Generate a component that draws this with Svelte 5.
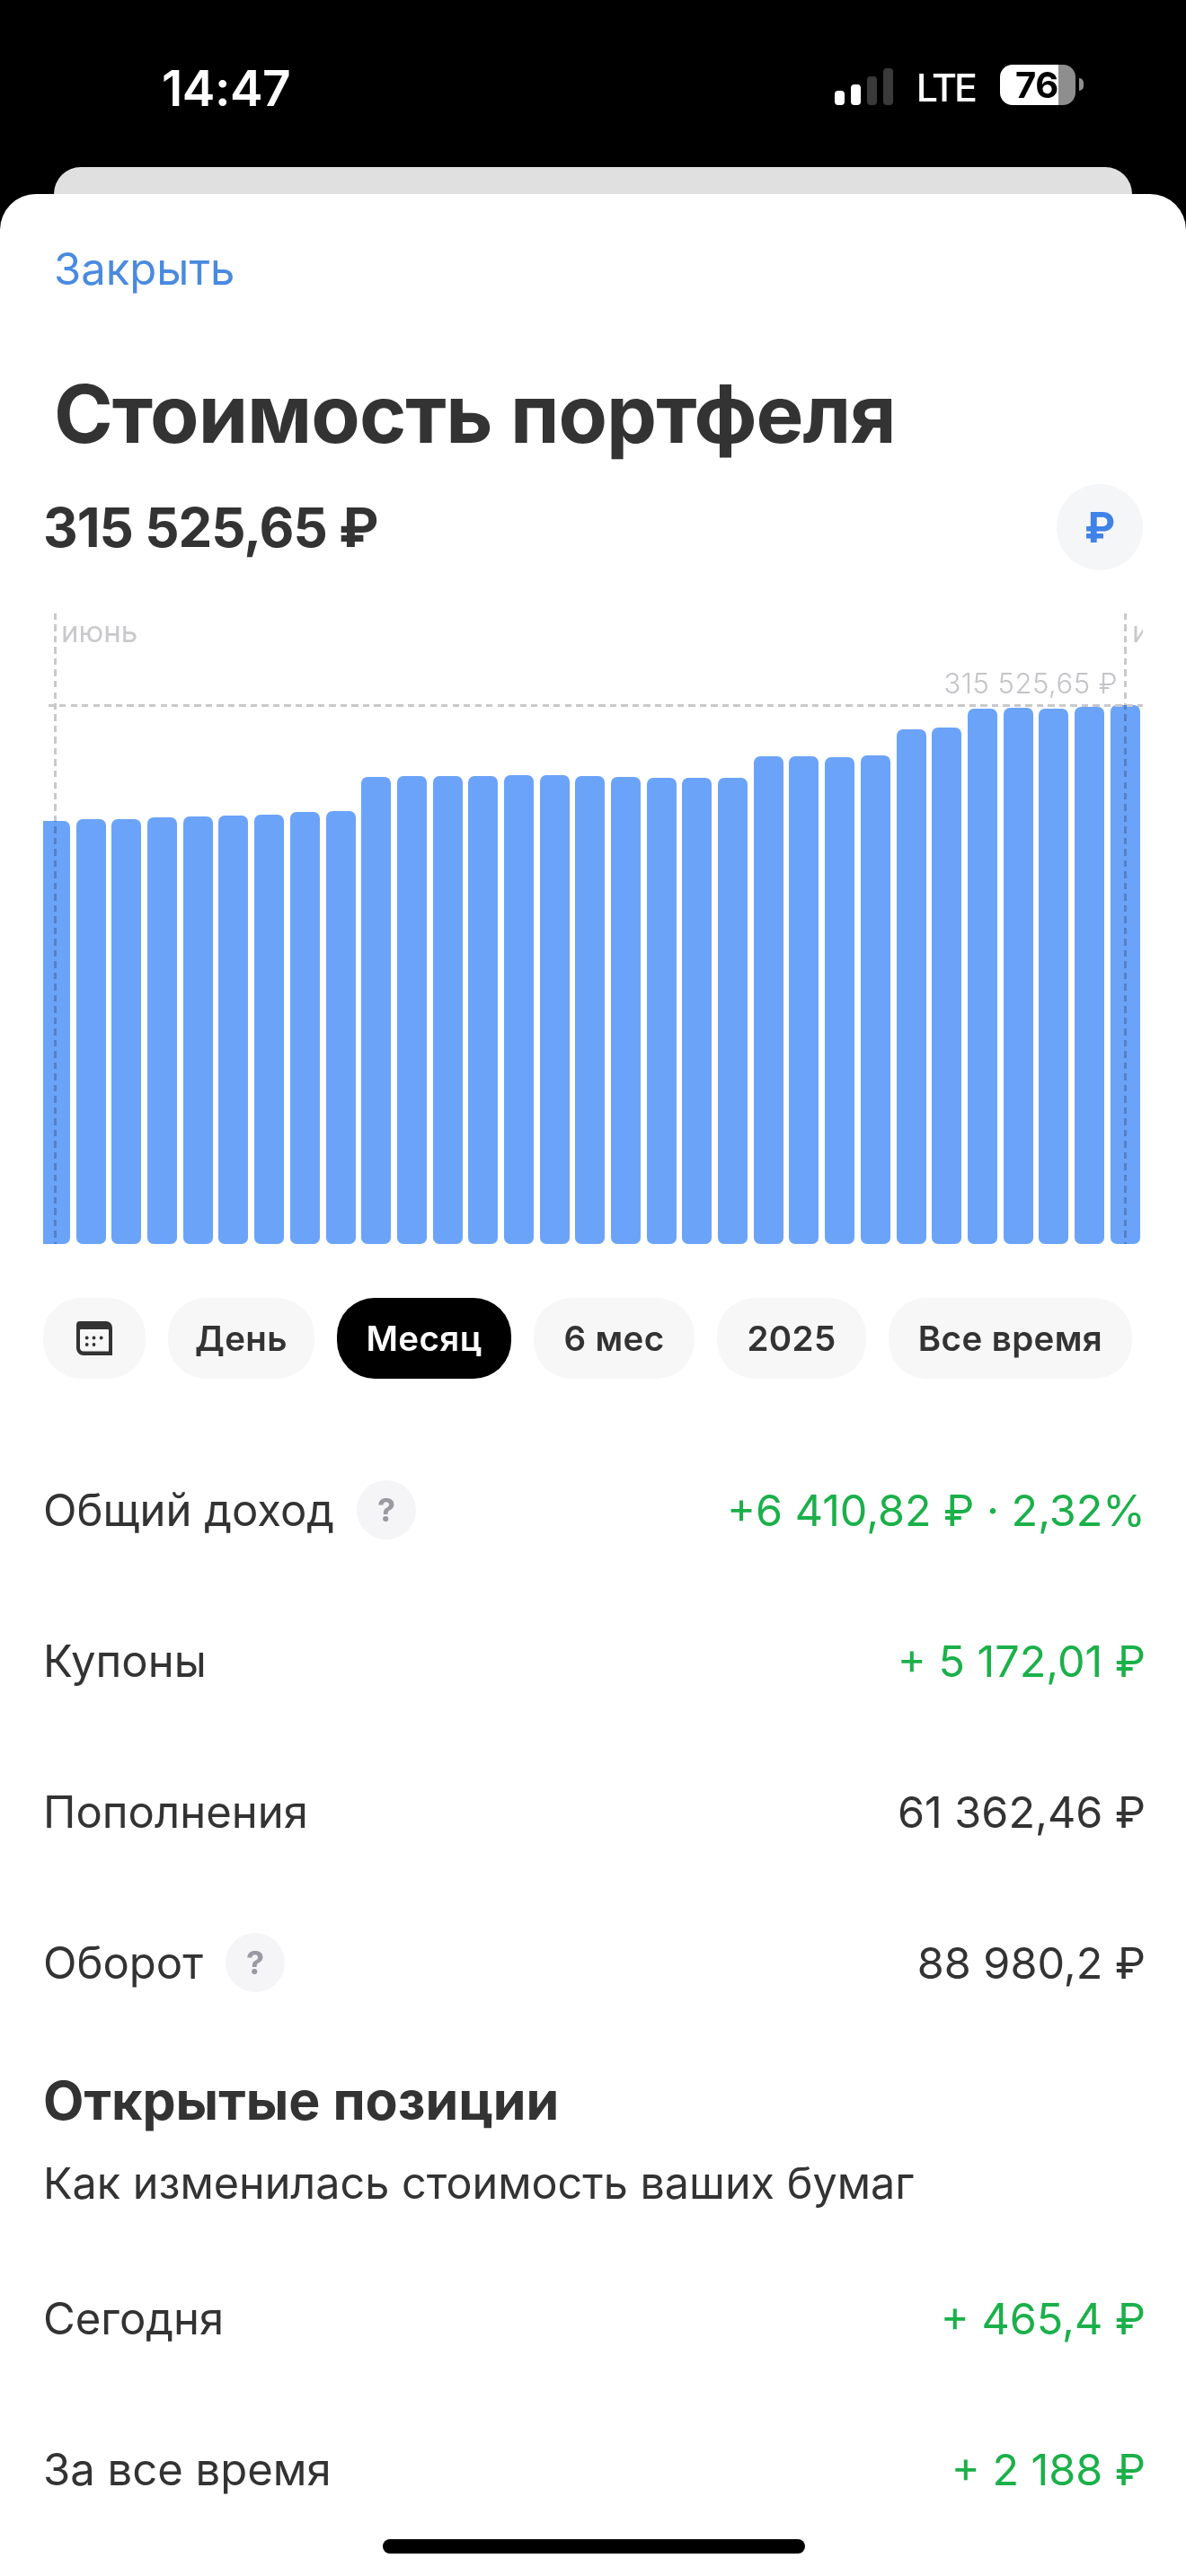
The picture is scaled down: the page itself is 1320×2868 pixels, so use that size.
<script lang="ts">
  // top edge of each bar in page pixels, bars end at y=1386
  const barTops = [
    915, 913, 912.7, 911, 910, 909, 908, 905, 904, 866, 865, 865, 865, 864, 864, 865,
    866, 867, 867.3, 867.3, 843, 843, 844, 842, 813, 811, 790, 789, 790, 788, 786
  ];
  const bars = barTops.map((top) => 1386 - top);

  const periods = [
    { label: 'День' },
    { label: 'Месяц', active: true },
    { label: '6 мес' },
    { label: '2025' },
    { label: 'Все время' }
  ];

  const stats = [
    { label: 'Общий доход', value: '+6 410,82 ₽ · 2,32%', help: true, up: true },
    { label: 'Купоны', value: '+ 5 172,01 ₽', up: true },
    { label: 'Пополнения', value: '61 362,46 ₽' },
    { label: 'Оборот', value: '88 980,2 ₽', help: true }
  ];

  const positions = [
    { label: 'Сегодня', value: '+ 465,4 ₽', up: true },
    { label: 'За все время', value: '+ 2 188 ₽', up: true }
  ];
</script>

{#snippet row(item)}
  <div class="row">
    <div class="row-label">
      <span>{item.label}</span>
      {#if item.help}<span class="help">?</span>{/if}
    </div>
    <span class="row-value" class:up={item.up}>{item.value}</span>
  </div>
{/snippet}

<div class="screen">
  <header class="status">
    <span class="time">14:47</span>
    <div class="status-right">
      <div class="signal">
        <i class="s1"></i><i class="s2"></i><i class="s3"></i><i class="s4"></i>
      </div>
      <span class="lte">LTE</span>
      <div class="battery"><span>76</span></div>
      <i class="nub"></i>
    </div>
  </header>

  <div class="peek"></div>

  <main class="sheet">
    <a class="close" href="#close">Закрыть</a>
    <h1>Стоимость портфеля</h1>

    <div class="total">
      <span class="total-value">315 525,65 ₽</span>
      <button class="currency">₽</button>
    </div>

    <div class="chart">
      <div class="bars">
        {#each bars as height}
          <div class="bar" style="height: {height}px"></div>
        {/each}
      </div>
      <span class="vline left"></span>
      <span class="vline right"></span>
      <span class="hline"></span>
      <span class="month">июнь</span>
      <span class="month next">и</span>
      <span class="max">315 525,65 ₽</span>
    </div>

    <div class="chips">
      <button class="chip icon" aria-label="Календарь">
        <svg width="40" height="38" viewBox="0 0 40 38">
          <path
            fill="#333"
            fill-rule="evenodd"
            d="M4 0H33A7 7 0 0 1 40 7V38H8A8 8 0 0 1 0 30V4A4 4 0 0 1 4 0ZM5 9A1 1 0 0 0 4 10V29A4 4 0 0 0 8 33.500H36V10A1 1 0 0 0 35 9Z"
          />
          <g fill="#333">
            <circle cx="11.700" cy="18.500" r="1.900" />
            <circle cx="19.500" cy="18.500" r="1.900" />
            <circle cx="27.700" cy="18.500" r="1.900" />
            <circle cx="11.700" cy="26" r="1.900" />
            <circle cx="19.500" cy="26" r="1.900" />
          </g>
        </svg>
      </button>
      {#each periods as period}
        <button class="chip" class:active={period.active}>{period.label}</button>
      {/each}
    </div>

    <section class="stats">
      {#each stats as item}
        {@render row(item)}
      {/each}
    </section>

    <h2>Открытые позиции</h2>
    <p class="sub">Как изменилась стоимость ваших бумаг</p>

    <section class="stats positions">
      {#each positions as item}
        {@render row(item)}
      {/each}
    </section>
  </main>

  <div class="home-bar"></div>
</div>

<style>
  :global(body) {
    background: #000;
  }

  .screen {
    position: relative;
    width: 1320px;
    height: 2868px;
    overflow: hidden;
    background: #000;
    font-family: Inter, "Noto Sans", sans-serif;
    color: #333;
  }

  .status {
    height: 186px;
    box-sizing: border-box;
    display: flex;
    justify-content: space-between;
    padding: 66px 114px 0 180px;
    color: #fff;
  }

  .time {
    font-size: 55px;
    line-height: 64px;
    font-weight: 600;
    letter-spacing: -0.5px;
  }

  .status-right {
    display: flex;
    align-items: flex-start;
    height: 60px;
    padding-top: 8px;
  }

  .signal {
    display: flex;
    align-items: flex-end;
    gap: 7px;
    height: 41px;
    margin-top: 2px;
  }

  .signal i {
    display: block;
    width: 11px;
    border-radius: 4px;
    background: #fff;
  }

  .signal .s1 { height: 16px; }
  .signal .s2 { height: 23px; }
  .signal .s3 { height: 32px; background: #3a3a3a; }
  .signal .s4 { height: 41px; background: #3a3a3a; }

  .lte {
    margin-left: 26px;
    font-size: 43px;
    line-height: 46px;
    font-weight: 500;
    letter-spacing: -3px;
  }

  .battery {
    width: 84px;
    height: 45px;
    margin-left: 28px;
    margin-top: -2px;
    border-radius: 14px;
    background: linear-gradient(90deg, #fff 77.4%, #8e8e8e 77.4%);
    color: #000;
    font-size: 40px;
    line-height: 45px;
    font-weight: 700;
    box-sizing: border-box;
    padding-left: 17px;
    letter-spacing: -0.5px;
  }

  .nub {
    display: block;
    width: 5px;
    height: 14px;
    margin: 13px 0 0 4px;
    border-radius: 0 7px 7px 0;
    background: #8e8e8e;
  }

  .peek {
    height: 60px;
    margin: 0 60px -30px;
    border-radius: 30px 30px 0 0;
    background: #e0e0e0;
  }

  .sheet {
    position: relative;
    height: 2652px;
    box-sizing: border-box;
    padding: 0 48px;
    border-radius: 40px 40px 0 0;
    background: #fff;
  }

  .close {
    display: block;
    padding-top: 54px;
    margin-left: 12px;
    font-size: 49px;
    line-height: 60px;
    color: #4a8ae0;
    text-decoration: none;
  }

  h1 {
    margin: 79px 0 0 12px;
    font-size: 89px;
    line-height: 104px;
    font-weight: 700;
    letter-spacing: -1px;
    color: #333;
  }

  .total {
    display: flex;
    align-items: center;
    justify-content: space-between;
    margin-top: 26px;
  }

  .total-value {
    font-size: 60px;
    font-weight: 700;
    letter-spacing: -1px;
  }

  .currency {
    width: 96px;
    height: 96px;
    padding: 0;
    border: 0;
    border-radius: 50%;
    background: #f5f6f8;
    color: #3f82e8;
    font: 700 46px Inter, sans-serif;
  }

  .chart {
    position: relative;
    height: 702px;
    margin-top: 48px;
    overflow: hidden;
  }

  .bars {
    display: flex;
    align-items: flex-end;
    gap: 6.7px;
    height: 100%;
  }

  .bar {
    flex: none;
    width: 33px;
    border-radius: 7px;
    background: #6ba3f9;
  }

  .bar:first-child {
    width: 30px;
    border-radius: 0 7px 7px 0;
  }

  .vline {
    position: absolute;
    top: 0;
    bottom: 0;
    width: 3px;
    background: repeating-linear-gradient(180deg, #c9c9cc 0 7px, transparent 7px 12.500px);
    mix-blend-mode: multiply;
  }

  .vline.left { left: 12px; }
  .vline.right { left: 1203px; }

  .hline {
    position: absolute;
    top: 101px;
    left: 6px;
    right: 0;
    height: 3px;
    background: repeating-linear-gradient(90deg, #c9c9cc 0 7px, transparent 7px 12.500px);
  }

  .month {
    position: absolute;
    top: 2px;
    left: 20px;
    font-size: 33px;
    line-height: 36px;
    color: #c9c9cc;
  }

  .month.next {
    left: 1212px;
  }

  .max {
    position: absolute;
    top: 60px;
    right: 28px;
    font-size: 31px;
    line-height: 36px;
    font-weight: 300;
    letter-spacing: 0.5px;
    color: #c4c4c8;
  }

  .chips {
    display: grid;
    grid-template-columns: 114px 163px 194px 179px 166px 271px;
    gap: 25px;
    margin-top: 60px;
  }

  .chip {
    height: 90px;
    padding: 0;
    border: 0;
    border-radius: 42px;
    background: #f7f7f7;
    color: #333;
    font: 600 38.500px Inter, sans-serif;
    letter-spacing: 0.4px;
  }

  .chip.icon {
    display: flex;
    align-items: center;
    justify-content: center;
  }

  .chip.active {
    background: #000;
    color: #fff;
  }

  .stats {
    margin-top: 62px;
  }

  .row {
    display: flex;
    align-items: center;
    justify-content: space-between;
    height: 168px;
    font-size: 48.500px;
  }

  .row-label {
    display: flex;
    align-items: center;
    gap: 25px;
    font-size: 49px;
  }

  .row-value {
    margin-right: -3px;
    color: #333;
  }

  .row-value.up {
    color: #1bb04a;
  }

  .help {
    width: 66px;
    height: 66px;
    display: flex;
    align-items: center;
    justify-content: center;
    border-radius: 50%;
    background: #f5f5f7;
    color: #9a9aa2;
    font-size: 36px;
    font-weight: 700;
  }

  h2 {
    margin: 34px 0 0;
    font-size: 59px;
    line-height: 72px;
    font-weight: 700;
    color: #333;
  }

  .sub {
    margin: 26px 0 0;
    font-size: 48.500px;
    line-height: 60px;
  }

  .positions {
    margin-top: 36px;
  }

  .home-bar {
    position: absolute;
    left: 426px;
    bottom: 25px;
    width: 470px;
    height: 16px;
    border-radius: 8px;
    background: #000;
  }
</style>
